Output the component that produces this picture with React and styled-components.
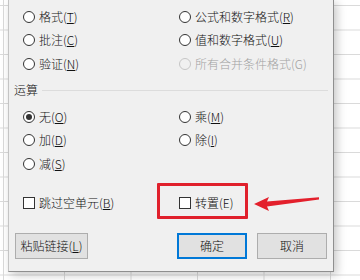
import styled, { createGlobalStyle } from 'styled-components';

const GlobalStyle = createGlobalStyle`
    body{
        margin: 0;
        font-family: "Noto Sans CJK SC", "Microsoft YaHei", sans-serif;
        font-size: 12px;
        font-weight: 300;
        color: #000;
    }
`;

const pasteOptions = [
    { label: "格式", key: "T" },
    { label: "公式和数字格式", key: "R" },
    { label: "批注", key: "C" },
    { label: "值和数字格式", key: "U" },
    { label: "验证", key: "N" },
    { label: "所有合并条件格式", key: "G", disabled: true },
];

const operations = [
    { label: "无", key: "O", checked: true },
    { label: "乘", key: "M" },
    { label: "加", key: "D" },
    { label: "除", key: "I" },
    { label: "减", key: "S" },
];

function Label({ text, hotkey, disabled }){
    return(
        <span>
            {text}({disabled ? hotkey : <u>{hotkey}</u>})
        </span>
    );
}

export default function App(){
    return(
        <Sheet>
            <GlobalStyle />
            <Dialog>
                <OptionGrid>
                    {pasteOptions.map(o => (
                        <Option key={o.key} disabled={o.disabled}>
                            <Radio disabled={o.disabled} />
                            <Label text={o.label} hotkey={o.key} disabled={o.disabled} />
                        </Option>
                    ))}
                </OptionGrid>
                <SectionHeader>
                    <span>运算</span>
                    <Rule />
                </SectionHeader>
                <OpsGrid>
                    {operations.map(o => (
                        <Option key={o.key}>
                            <Radio checked={o.checked} />
                            <Label text={o.label} hotkey={o.key} />
                        </Option>
                    ))}
                </OpsGrid>
                <CheckRow>
                    <Option>
                        <CheckBox />
                        <Label text="跳过空单元" hotkey="B" />
                    </Option>
                    <Option>
                        <CheckBox />
                        <span>转置(E)</span>
                        <Highlight />
                        <Arrow width="72" height="22" viewBox="0 0 72 22">
                            <polygon points="4,12 19,5 17,9.6 69,5.2 69,7.6 17,14.4 19,19" fill="#e3202c" />
                        </Arrow>
                    </Option>
                </CheckRow>
                <ButtonRow>
                    <Button width={73}>粘贴链接(<u>L</u>)</Button>
                    <Spacer />
                    <Button width={70} primary>确定</Button>
                    <Button width={70}>取消</Button>
                </ButtonRow>
            </Dialog>
        </Sheet>
    );
}

const Sheet = styled.div`
    width: 360px;
    height: 280px;
    overflow: hidden;
    box-sizing: border-box;
    padding-left: 8px;
    background-color: #fff;
    background-image:
        linear-gradient(to right, #dadada 1px, transparent 1px),
        linear-gradient(to right, #dadada 1px, transparent 1px),
        linear-gradient(to bottom, #dadada 1px, transparent 1px);
    background-size: 360px 280px, 66.5px 24.5px, 66.5px 24.5px;
    background-position: 3px 0, 64px 0, 0 5px;
    background-repeat: no-repeat, repeat, repeat;
`;

const Dialog = styled.div`
    width: 326px;
    height: 272px;
    box-sizing: border-box;
    background: #f0f0f0;
    border-left: 1px solid #c4c4c4;
    border-right: 1px solid #8f8f8f;
    border-bottom: 1px solid #8f8f8f;
    box-shadow: 3px 3px 9px rgba(0, 0, 0, 0.22);
    padding-top: 5px;
`;

const OptionGrid = styled.div`
    display: grid;
    grid-template-columns: 156px 1fr;
    grid-auto-rows: 23.5px;
    padding-left: 14px;
`;

const OpsGrid = styled(OptionGrid)`
    margin-top: 7px;
`;

const CheckRow = styled(OptionGrid)`
    margin-top: 16px;
`;

const Option = styled.div`
    position: relative;
    display: flex;
    align-items: center;
    gap: 4px;
    line-height: 16px;
    color: ${p => p.disabled ? '#a2a2a2' : '#111'};
    u{
        text-underline-offset: 1px;
    }
`;

const Radio = styled.span`
    width: 12px;
    height: 12px;
    box-sizing: border-box;
    border-radius: 50%;
    border: 1px solid ${p => p.disabled ? '#c6c6c6' : '#333'};
    background: ${p => p.disabled ? '#f0f0f0' : '#fff'};
    display: flex;
    align-items: center;
    justify-content: center;
    &::after{
        content: "";
        width: 6px;
        height: 6px;
        border-radius: 50%;
        background: ${p => p.checked ? '#333' : 'transparent'};
    }
`;

const CheckBox = styled.span`
    width: 12px;
    height: 12px;
    box-sizing: border-box;
    border: 1px solid #333;
    background: #fff;
`;

const SectionHeader = styled.div`
    display: flex;
    align-items: center;
    gap: 4px;
    height: 16px;
    line-height: 16px;
    margin-top: 6.5px;
    padding-left: 5px;
    padding-right: 5px;
    span{
        color: #111;
    }
`;

const Rule = styled.div`
    flex: 1;
    height: 1px;
    background: #dcdcdc;
`;

const Highlight = styled.div`
    position: absolute;
    left: -22px;
    top: -8.5px;
    width: 91px;
    height: 35.5px;
    box-sizing: border-box;
    border: 3px solid #e0202c;
    border-radius: 1px;
`;

const Arrow = styled.svg`
    position: absolute;
    left: 71px;
    top: 0px;
`;

const ButtonRow = styled.div`
    display: flex;
    gap: 10px;
    margin-top: 18px;
    padding: 0 6px;
`;

const Spacer = styled.div`
    flex: 1;
`;

const Button = styled.div`
    width: ${p => p.width}px;
    height: 26px;
    box-sizing: border-box;
    display: flex;
    align-items: center;
    justify-content: center;
    background: #e1e1e1;
    border: 1px solid ${p => p.primary ? '#0078d7' : '#adadad'};
    box-shadow: ${p => p.primary ? 'inset 0 0 0 1px #0078d7' : 'none'};
    font-size: 12px;
    line-height: 16px;
    color: #111;
    u{
        text-underline-offset: 1px;
    }
`;
